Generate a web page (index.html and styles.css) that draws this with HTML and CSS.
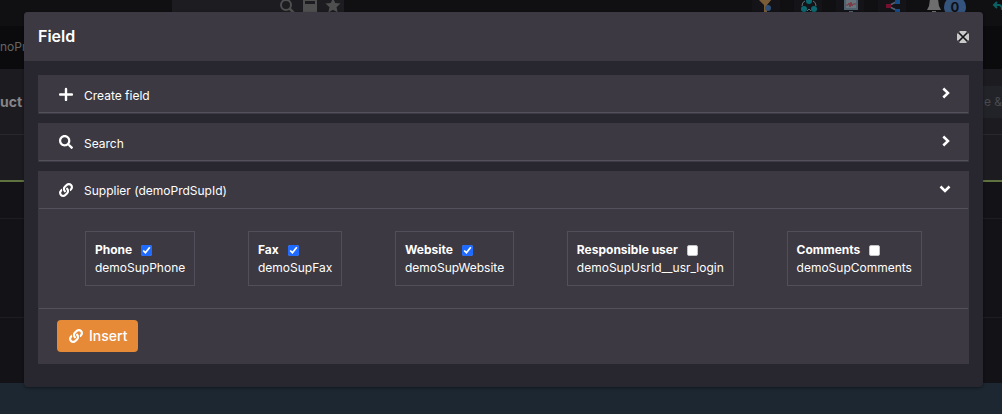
FILE: index.html
```html
<!DOCTYPE html>
<html lang="en">
<head>
<meta charset="utf-8">
<title>Field</title>
<link rel="stylesheet" href="styles.css">
</head>
<body>
<svg class="sprite" aria-hidden="true">
  <symbol id="i-link" viewBox="0 0 512 512"><path fill="currentColor" d="M326.612 185.391c59.747 59.809 58.927 155.698.36 214.59-.11.12-.24.25-.36.37l-67.2 67.2c-59.27 59.27-155.699 59.262-214.96 0-59.27-59.26-59.27-155.7 0-214.96l37.106-37.106c9.84-9.84 26.786-3.3 27.294 10.606.648 17.722 3.826 35.527 9.69 52.721 1.986 5.822.567 12.262-3.783 16.612l-13.087 13.087c-28.026 28.026-28.905 73.66-1.155 101.96 28.024 28.579 74.086 28.749 102.325.51l67.2-67.19c28.191-28.191 28.073-73.757 0-101.83-3.701-3.694-7.429-6.564-10.341-8.569a16.037 16.037 0 0 1-6.947-12.606c-.396-10.567 3.348-21.456 11.698-29.806l21.054-21.055c5.521-5.521 14.182-6.199 20.584-1.731a152.482 152.482 0 0 1 20.522 17.197zM467.547 44.449c-59.261-59.262-155.69-59.27-214.96 0l-67.2 67.2c-.12.12-.25.25-.36.37-58.566 58.892-59.387 154.781.36 214.59a152.454 152.454 0 0 0 20.521 17.196c6.402 4.468 15.064 3.789 20.584-1.731l21.054-21.055c8.35-8.35 12.094-19.239 11.698-29.806a16.037 16.037 0 0 0-6.947-12.606c-2.912-2.005-6.64-4.875-10.341-8.569-28.073-28.073-28.191-73.639 0-101.83l67.2-67.19c28.239-28.239 74.3-28.069 102.325.51 27.75 28.3 26.872 73.934-1.155 101.96l-13.087 13.087c-4.35 4.35-5.769 10.79-3.783 16.612 5.864 17.194 9.042 34.999 9.69 52.721.509 13.906 17.454 20.446 27.294 10.606l37.106-37.106c59.271-59.259 59.271-155.699.001-214.959z"/></symbol>
  <symbol id="i-search" viewBox="0 0 512 512"><path fill="currentColor" d="M505 442.7L405.3 343c-4.500-4.500-10.600-7-17-7H372c27.600-35.300 44-79.700 44-128C416 93.100 322.900 0 208 0S0 93.100 0 208s93.100 208 208 208c48.300 0 92.700-16.400 128-44v16.300c0 6.400 2.500 12.500 7 17l99.700 99.700c9.400 9.400 24.600 9.400 33.900 0l28.300-28.300c9.400-9.400 9.400-24.600.1-34zM208 336c-70.700 0-128-57.200-128-128 0-70.700 57.200-128 128-128 70.700 0 128 57.200 128 128 0 70.700-57.200 128-128 128z"/></symbol>
  <symbol id="i-right" viewBox="0 0 12 12"><path d="M4.300 1.500 9 6l-4.700 4.500" fill="none" stroke="currentColor" stroke-width="2.500"/></symbol>
  <symbol id="i-down" viewBox="0 0 12 12"><path d="M1.500 3.500 6 8l4.500-4.500" fill="none" stroke="currentColor" stroke-width="2.500"/></symbol>
</svg>

<div class="page" aria-hidden="true">
  <div class="topbar">
    <div class="searchbar">
      <svg class="tool" viewBox="0 0 16 16"><circle cx="7" cy="5" r="5" fill="none" stroke="#4f4f50" stroke-width="2"/><path d="m10.500 8.500 5 5" stroke="#4f4f50" stroke-width="2.500"/></svg>
      <svg class="tool" viewBox="0 0 16 16"><path fill="#4f4f50" fill-rule="evenodd" d="M1 0h14v12H1zM3 1h10v3H3z"/></svg>
      <svg class="tool" viewBox="0 0 16 16"><path fill="#4f4f50" d="m8-2 2.200 5 5.300.5-4 3.700 1.200 5.300L8 9.800l-4.700 2.700 1.200-5.300-4-3.700L5.800 3z"/></svg>
    </div>
    <div class="apps">
      <span class="app"><svg viewBox="0 0 28 12"><path fill="#7a5c37" d="M6-1h14l-5 6v7h-3V5z"/><circle cx="16" cy="8" r="3" fill="#2e5078"/></svg></span>
      <span class="app"><svg viewBox="0 0 28 12"><g fill="#0b6870"><circle cx="15" cy="1" r="3"/><circle cx="10" cy="9" r="3"/><circle cx="20" cy="9" r="3"/></g><path d="M11 1Q8 2 8 6M19 1q3 1 3 5M13 11l2-2 2 2" fill="none" stroke="#607075"/></svg></span>
      <span class="app"><svg viewBox="0 0 28 12"><path fill="#506270" d="M8-1h14v11H8zM13 11h4v1h-4z"/><path fill="#68757e" d="M10 0h10v8H10z"/><path d="M10 5h2l1-2 1 4 1-5 1 4 1-2h3" fill="none" stroke="#7d343e"/></svg></span>
      <span class="app"><svg viewBox="0 0 28 12"><path d="M20 1 10 6l10 5" fill="none" stroke="#536174" stroke-width="1.500"/><path fill="#76102f" d="M8 4h5v4H8z"/><path fill="#164b86" d="M17 0h5v4h-5zM17 9h5v3h-5z"/></svg></span>
      <span class="alerts"><svg class="bell" viewBox="0 0 16 12"><path fill="#6e6e6e" d="M4-1h8l1 7 2 4H1l2-4zM6 11h4v1H6z"/></svg><span class="count">0</span></span>
      <svg class="undo" viewBox="0 0 12 12"><path d="M7 2 4 5l3 3M4 5h5q3 0 3 5" fill="none" stroke="#0b6161" stroke-width="2"/></svg>
    </div>
  </div>
  <div class="crumbs">noPr</div>
  <div class="heading"><span>uct</span><span class="save">e &amp;</span></div>
  <div class="tabs"></div>
  <div class="row row-short"></div>
  <div class="row row-tall"></div>
  <div class="row row-last"></div>
  <div class="foot"></div>
</div>

<div class="modal" role="dialog" aria-labelledby="title">
  <header class="modal-head">
    <h1 class="title" id="title">Field</h1>
    <button class="close" type="button" aria-label="Close"><svg viewBox="0 0 12 12"><path fill="#c9c9c9" d="M3 0h6l3 3v6l-3 3H3L0 9V3z"/><path d="m1.500 1.500 9 9m0-9-9 9" stroke="#17161a" stroke-width="1.700"/></svg></button>
  </header>
  <div class="modal-body">
    <section class="panel">
      <button class="panel-head" type="button"><svg class="icon" viewBox="0 0 14 14"><path d="M7 2v11M1 7.500h12" stroke="currentColor" stroke-width="2.400" stroke-linecap="round"/></svg><span class="label">Create field</span><svg class="chevron"><use href="#i-right"/></svg></button>
    </section>
    <section class="panel">
      <button class="panel-head" type="button"><svg class="icon"><use href="#i-search"/></svg><span class="label">Search</span><svg class="chevron"><use href="#i-right"/></svg></button>
    </section>
    <section class="panel open">
      <button class="panel-head" type="button" aria-expanded="true"><svg class="icon"><use href="#i-link"/></svg><span class="label">Supplier (demoPrdSupId)</span><svg class="chevron"><use href="#i-down"/></svg></button>
      <div class="fields">
        <div class="field"><div class="field-name"><label for="phone">Phone</label><input class="check" type="checkbox" id="phone" checked></div><div>demoSupPhone</div></div>
        <div class="field"><div class="field-name"><label for="fax">Fax</label><input class="check" type="checkbox" id="fax" checked></div><div>demoSupFax</div></div>
        <div class="field"><div class="field-name"><label for="website">Website</label><input class="check" type="checkbox" id="website" checked></div><div>demoSupWebsite</div></div>
        <div class="field"><div class="field-name"><label for="user">Responsible user</label><input class="check" type="checkbox" id="user"></div><div>demoSupUsrId__usr_login</div></div>
        <div class="field"><div class="field-name"><label for="comments">Comments</label><input class="check" type="checkbox" id="comments"></div><div>demoSupComments</div></div>
      </div>
      <div class="actions"><button class="insert" type="button"><svg class="icon"><use href="#i-link"/></svg>Insert</button></div>
    </section>
  </div>
</div>
</body>
</html>
```
FILE: styles.css
```css
* { box-sizing: border-box; }
body {
  margin: 0;
  background: #131217;
  color: #fff;
  font: 12px/18px Inter, "Liberation Sans", sans-serif;
}
button { border: 0; color: inherit; font: inherit; cursor: pointer; }
svg { display: block; }
.sprite { display: none; }

.page { display: flex; flex-direction: column; min-height: 100vh; }
.topbar { display: flex; justify-content: space-between; height: 26px; background: #101013; }
.searchbar { display: flex; justify-content: flex-end; gap: 7px; width: 172px; margin-left: 172px; padding-right: 3px; background: #1d1c21; }
.tool { width: 16px; height: 16px; }
.apps { display: flex; gap: 14px; }
.app { width: 28px; height: 26px; background: #141418; }
.app svg { width: 28px; height: 12px; }
.alerts { display: flex; gap: 2px; margin-left: 6px; }
.bell { width: 16px; height: 12px; }
.count { width: 22px; height: 22px; margin-top: -4px; border-radius: 50%; background: #34547e; color: #101013; font-size: 13px; font-weight: 700; line-height: 22px; text-align: center; }
.undo { width: 12px; height: 12px; margin-left: 10px; }
.crumbs { height: 43px; padding-top: 12px; background: #0b0b0d; color: #666; }
.heading { display: flex; justify-content: space-between; align-items: center; height: 66px; border-bottom: 1px solid #29282d; background: #1c1b20; color: #858487; font-size: 14px; font-weight: 700; }
.save { padding: 7px 0 7px 4px; background: #222328; color: #49494d; font-size: 12px; font-weight: 400; }
.tabs { height: 47px; border-bottom: 2px solid #5e713e; background: #1c1b20; }
.row { border-bottom: 1px solid #1e1d22; }
.row-short { height: 37px; }
.row-tall { height: 99px; }
.row-last { height: 65px; border: 0; }
.foot { flex: 1; min-height: 31px; background: #1c2731; }

.modal { position: absolute; top: 12px; left: 24px; right: 19px; border-radius: 4px; background: #28262f; box-shadow: 0 1px 3px #0006; }
.modal-head { display: flex; align-items: center; justify-content: space-between; height: 49px; padding: 0 14px; border-radius: 4px 4px 0 0; background: #3c3943; }
.title { margin: 0; padding-bottom: 2px; font-size: 16px; font-weight: 600; }
.close { padding: 0; background: none; }
.close svg { width: 12px; height: 12px; }
.modal-body { display: flex; flex-direction: column; gap: 9px; padding: 14px 14px 23px; }
.panel { padding: 1px; background: #3c3943; }
.panel-head { display: flex; align-items: center; gap: 11px; width: 100%; height: 37px; padding: 0 17px 0 20px; border-bottom: 1px solid #53515b; background: none; text-align: left; }
.icon { flex: none; width: 14px; height: 14px; }
.label { flex: 1; padding-top: 4px; }
.open .label { padding-top: 2px; }
.chevron { width: 12px; height: 12px; margin-bottom: 3px; }
.fields { display: flex; justify-content: space-between; padding: 22px 46px; border-bottom: 1px solid #53515b; }
.field { padding: 9px 9px 8px; border: 1px solid #514f5a; }
.field-name { display: flex; align-items: center; gap: 9px; font-weight: 700; }
.check { width: 11px; height: 11px; margin: 0; accent-color: #1f6bff; }
.check:not(:checked) { appearance: none; border: 1px solid #c4c4c8; border-radius: 2px; background: #fff; }
.actions { padding: 11px 18px; }
.insert { display: flex; align-items: center; gap: 6px; height: 32px; padding: 0 11px 0 12px; border-radius: 4px; background: #e68a37; font-size: 14px; font-weight: 500; }
```
